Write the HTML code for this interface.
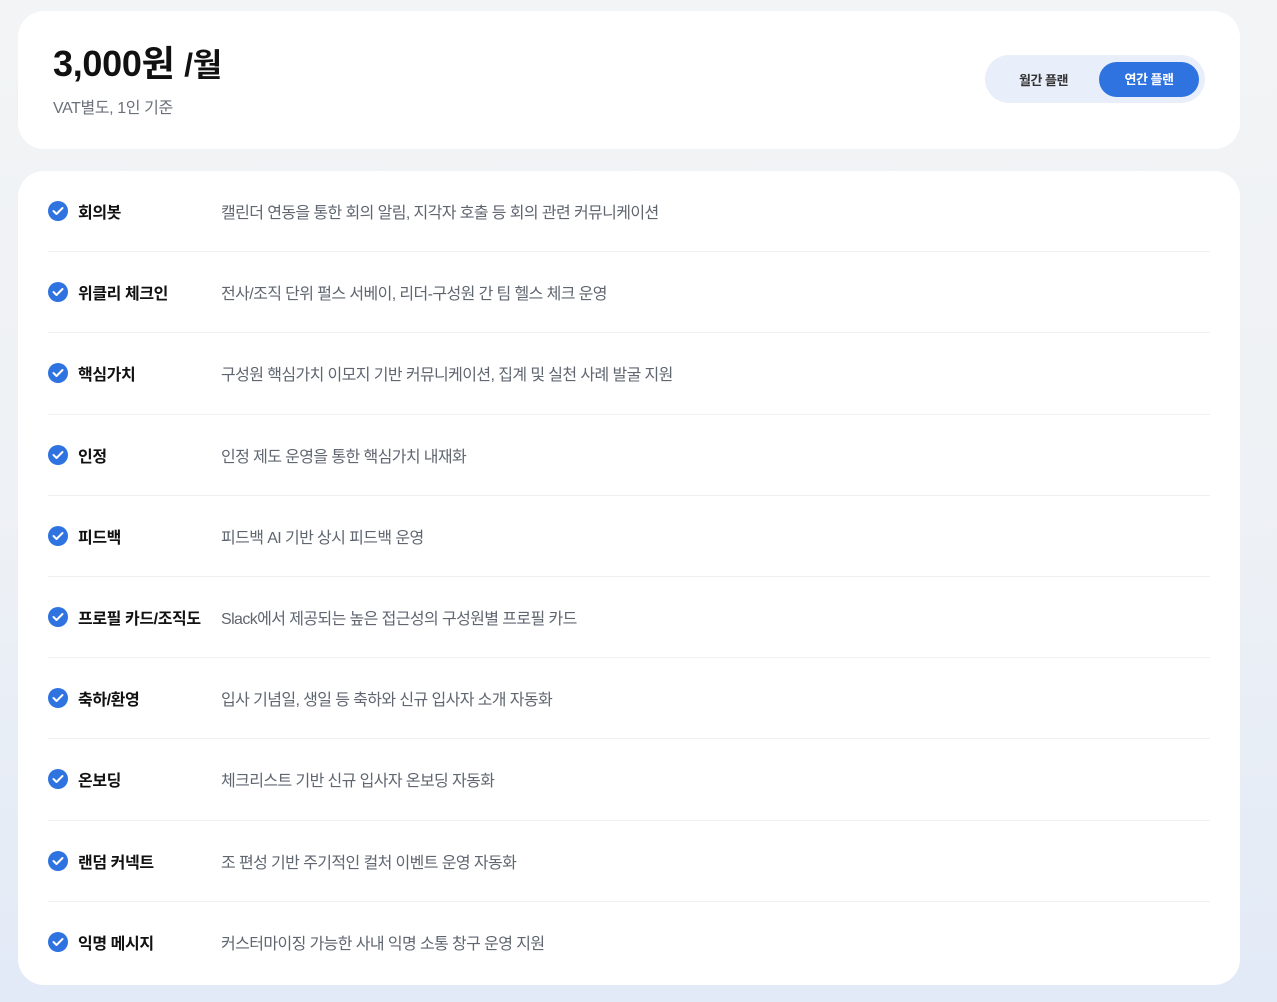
<!DOCTYPE html>
<html><head><meta charset="utf-8"><style>
*{margin:0;padding:0;box-sizing:border-box}
body{width:1277px;height:1002px;overflow:hidden;background:linear-gradient(180deg,#f2f4f5 0%,#eef1f5 50%,#e2eaf7 100%);font-family:"Liberation Sans","Noto Sans CJK KR",sans-serif;position:relative}
.card{position:absolute;left:18px;width:1222px;background:#fff;border-radius:26px}
.top{top:11px;height:138px}
.price{position:absolute;left:35px;top:24px;font-size:36px;font-weight:700;color:#111;letter-spacing:-0.3px}
.price span{font-size:32px}
.vat{position:absolute;left:35px;top:83px;font-size:16px;color:#6b7079;letter-spacing:-0.4px}
.tog{position:absolute;left:967px;top:44px;width:220px;height:48px;background:#e8eefa;border-radius:24px}
.tog .m{position:absolute;left:34px;top:15px;font-size:13px;font-weight:700;color:#333;letter-spacing:-0.5px}
.tog .y{position:absolute;left:114px;top:7px;width:100px;height:35px;background:#2f73e0;border-radius:18px;color:#fff;font-size:13px;font-weight:700;text-align:center;line-height:35px;letter-spacing:-0.5px}
.list{top:171px;height:814px}
.row{position:absolute;left:30px;width:1162px;height:81.2px;display:flex;align-items:center}
.row.b{border-bottom:1px solid #eef0f3}
.chk{width:20px;height:20px;border-radius:50%;background:#2f73e0;display:flex;align-items:center;justify-content:center;margin-right:10px}
.t{width:143px;font-size:16px;font-weight:700;color:#111;white-space:nowrap;letter-spacing:-0.4px}
.d{font-size:16px;color:#5f6670;white-space:nowrap;letter-spacing:-0.6px}
</style></head><body>
<div class="card top">
<div class="price">3,000원 <span>/월</span></div>
<div class="vat">VAT별도, 1인 기준</div>
<div class="tog"><div class="m">월간 플랜</div><div class="y">연간 플랜</div></div>
</div>
<div class="card list">
<div class="row b" style="top:0"><div class="chk"><svg width="12" height="10" viewBox="0 0 12 10"><path d="M1.5 5 L4.5 8 L10.5 2" stroke="#fff" stroke-width="2" fill="none" stroke-linecap="round" stroke-linejoin="round"/></svg></div><div class="t">회의봇</div><div class="d">캘린더 연동을 통한 회의 알림, 지각자 호출 등 회의 관련 커뮤니케이션</div></div>
<div class="row b" style="top:81.2px"><div class="chk"><svg width="12" height="10" viewBox="0 0 12 10"><path d="M1.5 5 L4.5 8 L10.5 2" stroke="#fff" stroke-width="2" fill="none" stroke-linecap="round" stroke-linejoin="round"/></svg></div><div class="t">위클리 체크인</div><div class="d">전사/조직 단위 펄스 서베이, 리더-구성원 간 팀 헬스 체크 운영</div></div>
<div class="row b" style="top:162.4px"><div class="chk"><svg width="12" height="10" viewBox="0 0 12 10"><path d="M1.5 5 L4.5 8 L10.5 2" stroke="#fff" stroke-width="2" fill="none" stroke-linecap="round" stroke-linejoin="round"/></svg></div><div class="t">핵심가치</div><div class="d">구성원 핵심가치 이모지 기반 커뮤니케이션, 집계 및 실천 사례 발굴 지원</div></div>
<div class="row b" style="top:243.6px"><div class="chk"><svg width="12" height="10" viewBox="0 0 12 10"><path d="M1.5 5 L4.5 8 L10.5 2" stroke="#fff" stroke-width="2" fill="none" stroke-linecap="round" stroke-linejoin="round"/></svg></div><div class="t">인정</div><div class="d">인정 제도 운영을 통한 핵심가치 내재화</div></div>
<div class="row b" style="top:324.8px"><div class="chk"><svg width="12" height="10" viewBox="0 0 12 10"><path d="M1.5 5 L4.5 8 L10.5 2" stroke="#fff" stroke-width="2" fill="none" stroke-linecap="round" stroke-linejoin="round"/></svg></div><div class="t">피드백</div><div class="d">피드백 AI 기반 상시 피드백 운영</div></div>
<div class="row b" style="top:406px"><div class="chk"><svg width="12" height="10" viewBox="0 0 12 10"><path d="M1.5 5 L4.5 8 L10.5 2" stroke="#fff" stroke-width="2" fill="none" stroke-linecap="round" stroke-linejoin="round"/></svg></div><div class="t">프로필 카드/조직도</div><div class="d">Slack에서 제공되는 높은 접근성의 구성원별 프로필 카드</div></div>
<div class="row b" style="top:487.2px"><div class="chk"><svg width="12" height="10" viewBox="0 0 12 10"><path d="M1.5 5 L4.5 8 L10.5 2" stroke="#fff" stroke-width="2" fill="none" stroke-linecap="round" stroke-linejoin="round"/></svg></div><div class="t">축하/환영</div><div class="d">입사 기념일, 생일 등 축하와 신규 입사자 소개 자동화</div></div>
<div class="row b" style="top:568.4px"><div class="chk"><svg width="12" height="10" viewBox="0 0 12 10"><path d="M1.5 5 L4.5 8 L10.5 2" stroke="#fff" stroke-width="2" fill="none" stroke-linecap="round" stroke-linejoin="round"/></svg></div><div class="t">온보딩</div><div class="d">체크리스트 기반 신규 입사자 온보딩 자동화</div></div>
<div class="row b" style="top:649.6px"><div class="chk"><svg width="12" height="10" viewBox="0 0 12 10"><path d="M1.5 5 L4.5 8 L10.5 2" stroke="#fff" stroke-width="2" fill="none" stroke-linecap="round" stroke-linejoin="round"/></svg></div><div class="t">랜덤 커넥트</div><div class="d">조 편성 기반 주기적인 컬처 이벤트 운영 자동화</div></div>
<div class="row" style="top:730.8px"><div class="chk"><svg width="12" height="10" viewBox="0 0 12 10"><path d="M1.5 5 L4.5 8 L10.5 2" stroke="#fff" stroke-width="2" fill="none" stroke-linecap="round" stroke-linejoin="round"/></svg></div><div class="t">익명 메시지</div><div class="d">커스터마이징 가능한 사내 익명 소통 창구 운영 지원</div></div>
</div>
</body></html>
